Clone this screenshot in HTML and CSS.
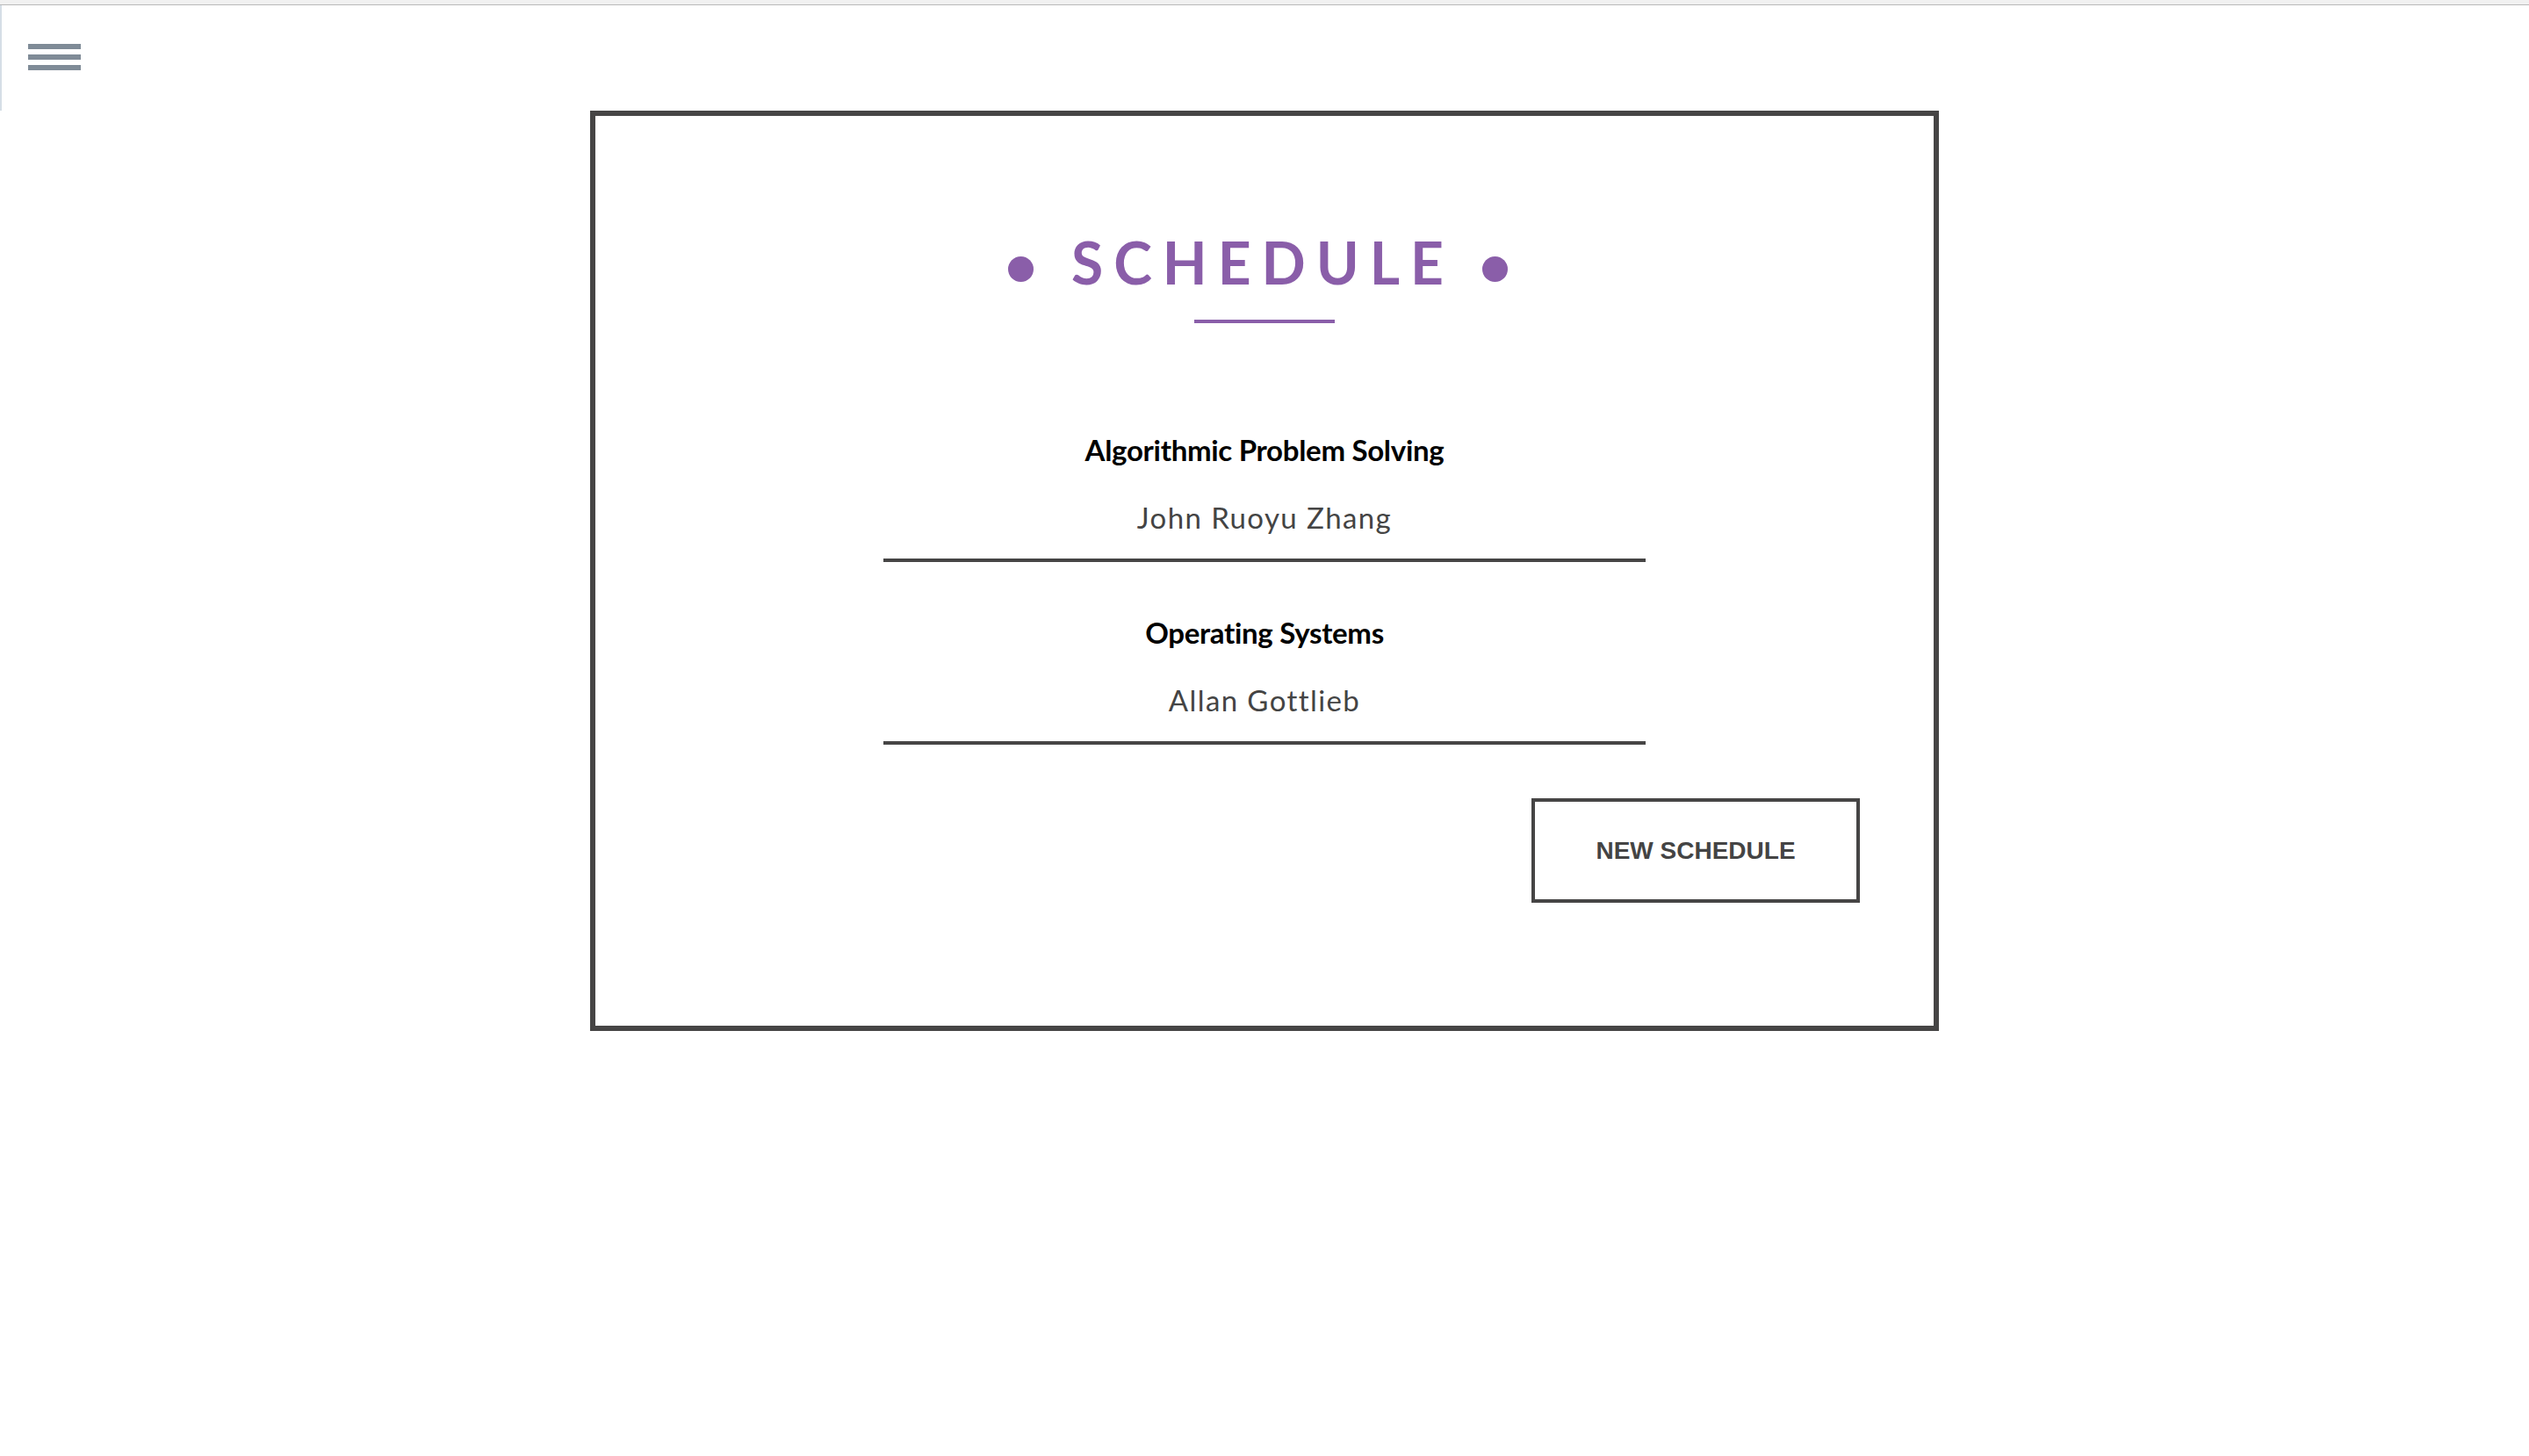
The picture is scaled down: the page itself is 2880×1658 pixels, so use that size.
FILE: index.html
```html
<!DOCTYPE html>
<html lang="en">
<head>
<meta charset="utf-8">
<title>Schedule</title>
<link rel="stylesheet" href="styles.css">
</head>
<body>
<div class="topbar"></div>
<header class="header">
  <button class="menu-toggle" aria-label="Menu">
    <span class="bar"></span>
    <span class="bar"></span>
    <span class="bar"></span>
  </button>
</header>
<main class="card">
  <div class="title-row">
    <span class="dot"></span>
    <h1 class="title">SCHEDULE</h1>
    <span class="dot dot-end"></span>
  </div>
  <div class="title-rule"></div>
  <ul class="courses">
    <li class="course">
      <div class="course-name">Algorithmic Problem Solving</div>
      <div class="course-prof">John Ruoyu Zhang</div>
    </li>
    <li class="course">
      <div class="course-name">Operating Systems</div>
      <div class="course-prof">Allan Gottlieb</div>
    </li>
  </ul>
  <div class="actions">
    <button class="btn-new">NEW SCHEDULE</button>
  </div>
</main>
</body>
</html>
```
FILE: styles.css
```css
html, body {
  margin: 0;
  padding: 0;
  background: #ffffff;
}

body {
  font-family: "Lato", "Liberation Sans", sans-serif;
}

.topbar {
  height: 5px;
  background: #f1f1f1;
  border-bottom: 1px solid #b9b9b9;
}

.header {
  height: 120px;
  display: flex;
}

.menu-toggle {
  width: 100px;
  height: 120px;
  margin: 0;
  padding: 44px 0 0 30px;
  border: 0;
  border-left: 2px solid #d5dee6;
  background: transparent;
  display: flex;
  flex-direction: column;
  align-items: flex-start;
  gap: 6px;
  box-sizing: border-box;
}

.bar {
  display: block;
  width: 60px;
  height: 6px;
  background: #7f8b97;
}

.card {
  box-sizing: border-box;
  width: 1536px;
  height: 1048px;
  margin: 0 auto;
  border: 6px solid #464545;
  padding-top: 127px;
  display: flex;
  flex-direction: column;
}

.title-row {
  display: flex;
  justify-content: center;
  align-items: center;
}

.dot {
  width: 29px;
  height: 29px;
  border-radius: 50%;
  background: #8a5ea9;
  margin-top: 14px;
}

.dot-end {
  margin-right: 15px;
}

.title {
  margin: 0 32px 0 43px;
  font-family: "Lato", sans-serif;
  font-weight: 700;
  font-size: 66px;
  line-height: 80px;
  letter-spacing: 12px;
  color: #8a5ea9;
}

.title-rule {
  width: 160px;
  height: 4px;
  background: #8a5ea9;
  margin: 25px auto 0;
}

.courses {
  list-style: none;
  margin: 124px auto 0;
  padding: 0;
  width: 868px;
}

.course {
  border-bottom: 4px solid #464545;
  padding-bottom: 27px;
  text-align: center;
}

.course + .course {
  margin-top: 60px;
}

.course-name {
  font-family: "Lato", sans-serif;
  font-weight: 700;
  font-size: 33px;
  line-height: 40px;
  color: #000000;
  letter-spacing: -0.3px;
}

.course-prof {
  margin-top: 37px;
  font-family: "Lato", sans-serif;
  font-weight: 400;
  font-size: 33px;
  line-height: 40px;
  color: #444444;
  letter-spacing: 1.4px;
}

.actions {
  display: flex;
  justify-content: flex-end;
  margin-top: 61px;
  padding-right: 84px;
}

.btn-new {
  box-sizing: border-box;
  width: 374px;
  height: 119px;
  border: 4px solid #464545;
  background: #ffffff;
  font-family: "Liberation Sans", Arial, sans-serif;
  font-weight: 700;
  font-size: 28px;
  color: #444444;
  padding: 0;
}
```
